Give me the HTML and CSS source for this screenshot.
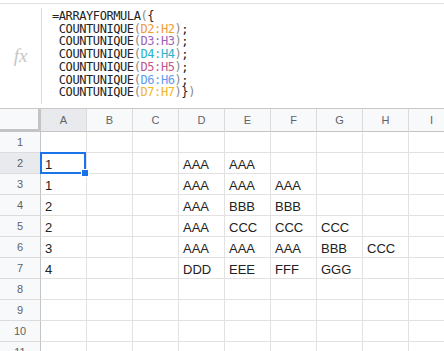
FILE: index.html
```html
<!DOCTYPE html>
<html>
<head>
<meta charset="utf-8">
<link rel="stylesheet" href="styles.css">
</head>
<body>
<div class="formula">
  <div class="fx">fx</div>
  <div class="divider"></div>
  <div class="code">
    <div class="ln">=ARRAYFORMULA<span class="p">(</span>{</div>
    <div class="ln"> COUNTUNIQUE<span class="p">(</span><span class="c1">D2:H2</span><span class="p">)</span>;</div>
    <div class="ln"> COUNTUNIQUE<span class="p">(</span><span class="c2">D3:H3</span><span class="p">)</span>;</div>
    <div class="ln"> COUNTUNIQUE<span class="p">(</span><span class="c3">D4:H4</span><span class="p">)</span>;</div>
    <div class="ln"> COUNTUNIQUE<span class="p">(</span><span class="c4">D5:H5</span><span class="p">)</span>;</div>
    <div class="ln"> COUNTUNIQUE<span class="p">(</span><span class="c5">D6:H6</span><span class="p">)</span>;</div>
    <div class="ln"> COUNTUNIQUE<span class="p">(</span><span class="c6">D7:H7</span><span class="p">)</span>}<span class="p">)</span></div>
  </div>
</div>
<div class="sheet">
  <div class="row head">
    <div class="corner"></div>
    <div class="ch sel">A</div><div class="ch">B</div><div class="ch">C</div><div class="ch">D</div><div class="ch">E</div><div class="ch">F</div><div class="ch">G</div><div class="ch">H</div><div class="ch">I</div>
  </div>
  <div class="row"><div class="rh">1</div><div class="c"></div><div class="c"></div><div class="c"></div><div class="c"></div><div class="c"></div><div class="c"></div><div class="c"></div><div class="c"></div><div class="c"></div></div>
  <div class="row"><div class="rh sel">2</div><div class="c a2">1<span class="selbox"><span class="handle"></span></span></div><div class="c"></div><div class="c"></div><div class="c">AAA</div><div class="c">AAA</div><div class="c"></div><div class="c"></div><div class="c"></div><div class="c"></div></div>
  <div class="row"><div class="rh">3</div><div class="c">1</div><div class="c"></div><div class="c"></div><div class="c">AAA</div><div class="c">AAA</div><div class="c">AAA</div><div class="c"></div><div class="c"></div><div class="c"></div></div>
  <div class="row"><div class="rh">4</div><div class="c">2</div><div class="c"></div><div class="c"></div><div class="c">AAA</div><div class="c">BBB</div><div class="c">BBB</div><div class="c"></div><div class="c"></div><div class="c"></div></div>
  <div class="row"><div class="rh">5</div><div class="c">2</div><div class="c"></div><div class="c"></div><div class="c">AAA</div><div class="c">CCC</div><div class="c">CCC</div><div class="c">CCC</div><div class="c"></div><div class="c"></div></div>
  <div class="row"><div class="rh">6</div><div class="c">3</div><div class="c"></div><div class="c"></div><div class="c">AAA</div><div class="c">AAA</div><div class="c">AAA</div><div class="c">BBB</div><div class="c">CCC</div><div class="c"></div></div>
  <div class="row"><div class="rh">7</div><div class="c">4</div><div class="c"></div><div class="c"></div><div class="c">DDD</div><div class="c">EEE</div><div class="c">FFF</div><div class="c">GGG</div><div class="c"></div><div class="c"></div></div>
  <div class="row"><div class="rh">8</div><div class="c"></div><div class="c"></div><div class="c"></div><div class="c"></div><div class="c"></div><div class="c"></div><div class="c"></div><div class="c"></div><div class="c"></div></div>
  <div class="row"><div class="rh">9</div><div class="c"></div><div class="c"></div><div class="c"></div><div class="c"></div><div class="c"></div><div class="c"></div><div class="c"></div><div class="c"></div><div class="c"></div></div>
  <div class="row"><div class="rh">10</div><div class="c"></div><div class="c"></div><div class="c"></div><div class="c"></div><div class="c"></div><div class="c"></div><div class="c"></div><div class="c"></div><div class="c"></div></div>
  <div class="row"><div class="rh">11</div><div class="c"></div><div class="c"></div><div class="c"></div><div class="c"></div><div class="c"></div><div class="c"></div><div class="c"></div><div class="c"></div><div class="c"></div></div>
</div>
</body>
</html>
```
FILE: styles.css
```css
html, body {
  margin: 0;
  padding: 0;
  background: #fff;
  overflow: hidden;
}
body {
  width: 444px;
  height: 351px;
  font-family: "Liberation Sans", Arial, sans-serif;
}
.formula {
  margin-top: 3px;
  height: 105px;
  box-sizing: border-box;
  border-top: 1px solid #e0e0e0;
  display: flex;
}
.fx {
  width: 41px;
  flex: none;
  display: flex;
  align-items: center;
  justify-content: center;
  font-family: "Liberation Serif", serif;
  font-style: italic;
  font-size: 19px;
  color: #c6c6c6;
}
.divider {
  width: 1px;
  flex: none;
  margin: 4px 0 4px 0;
  background: #dadada;
}
.code {
  padding: 6px 0 0 10px;
  font-family: "DejaVu Sans Mono", monospace;
  font-size: 12px;
  letter-spacing: -0.42px;
  line-height: 12.7px;
  color: #222;
}
.ln {
  white-space: pre;
}
.p { color: #8a8a8a; }
.c1 { color: #f29b38; }
.c2 { color: #9e62b6; }
.c3 { color: #2db3cb; }
.c4 { color: #c2578c; }
.c5 { color: #5f9ded; }
.c6 { color: #f2b62a; }

.sheet {
  border-top: 1px solid #c8c8c8;
}
.row {
  display: flex;
}
.corner {
  width: 41px;
  height: 23px;
  flex: none;
  box-sizing: border-box;
  background: #f8f9fa;
  border-right: 3px solid #c4c4c4;
  border-bottom: 3px solid #c4c4c4;
}
.ch {
  width: 46px;
  height: 23px;
  flex: none;
  box-sizing: border-box;
  background: #f8f9fa;
  border-right: 1px solid #dcdcdc;
  border-bottom: 1px solid #c4c4c4;
  color: #5f6368;
  font-size: 11px;
  display: flex;
  align-items: center;
  justify-content: center;
}
.ch.sel, .rh.sel {
  background: #e8eaed;
}
.rh {
  width: 41px;
  height: 21px;
  flex: none;
  box-sizing: border-box;
  background: #f8f9fa;
  border-right: 1px solid #c4c4c4;
  border-bottom: 1px solid #dcdcdc;
  color: #5f6368;
  font-size: 11px;
  display: flex;
  align-items: center;
  justify-content: center;
}
.c {
  width: 46px;
  height: 21px;
  flex: none;
  box-sizing: border-box;
  border-right: 1px solid #e2e2e2;
  border-bottom: 1px solid #e2e2e2;
  font-size: 13px;
  line-height: 16px;
  padding: 4px 0 0 4px;
  color: #222;
  white-space: nowrap;
}
.a2 {
  position: relative;
}
.selbox {
  position: absolute;
  left: -1px;
  top: -1px;
  width: 46px;
  height: 22px;
  box-sizing: border-box;
  border: 2px solid #1a73e8;
}
.handle {
  position: absolute;
  right: -5px;
  bottom: -5px;
  width: 6px;
  height: 6px;
  background: #1a73e8;
  border: 1px solid #fff;
}
```
